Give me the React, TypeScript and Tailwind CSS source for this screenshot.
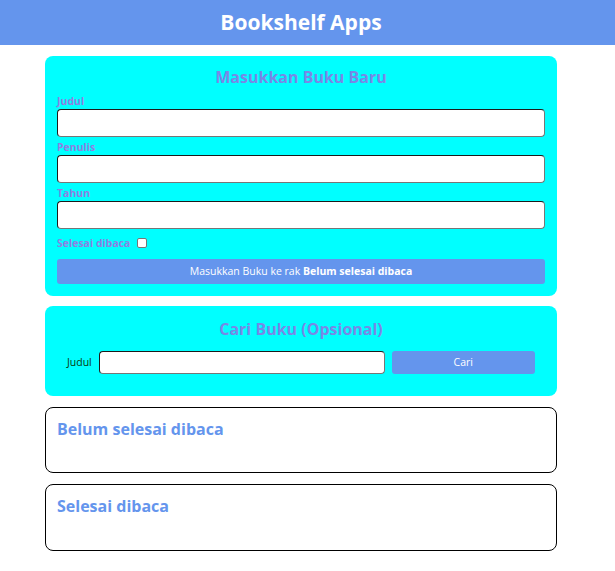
export default function App() {
  const inputCls =
    "block w-full h-[28px] bg-white rounded-[4px] border border-t-[#1b1b1b] border-l-[#1b1b1b] border-r-[#767676] border-b-[#767676] px-1 text-[13px] outline-none";

  return (
    <div className="min-h-[571px] bg-white font-['Open_Sans','Noto_Sans',sans-serif]">
      <header className="bg-[#6495ed] h-[45px] flex items-center">
        <div className="w-[602px] text-center">
          <h1 className="text-white text-[21px] font-bold leading-none">Bookshelf Apps</h1>
        </div>
      </header>

      <main className="w-[602px] pt-[11px]">
        <div className="w-[512px] mx-auto flex flex-col">
          <section className="bg-[#00ffff] rounded-lg px-3 pt-[10px] pb-[12px]">
            <h2 className="text-center text-[16px] font-bold text-[#7888e6] leading-[22px]">Masukkan Buku Baru</h2>
            <form className="mt-[3px]" onSubmit={(e) => e.preventDefault()}>
              {["Judul", "Penulis", "Tahun"].map((label) => (
                <div key={label}>
                  <label className="block text-[10.5px] font-bold text-[#8f7fe2] leading-[16px] pt-[2px]">{label}</label>
                  <input type={label === "Tahun" ? "number" : "text"} className={inputCls} />
                </div>
              ))}
              <div className="flex items-center gap-[7px] mt-[6px] h-[16px]">
                <label className="text-[10.5px] font-bold text-[#8f7fe2] leading-[13px]">Selesai dibaca</label>
                <input type="checkbox" className="w-[10px] h-[10px] appearance-none bg-white border border-[#767676] rounded-[2px]" />
              </div>
              <button
                type="submit"
                className="mt-[8px] w-full h-[25px] bg-[#6495ed] rounded-[3px] text-white text-[10.5px] leading-none"
              >
                Masukkan Buku ke rak <span className="font-bold">Belum selesai dibaca</span>
              </button>
            </form>
          </section>

          <section className="mt-[10px] bg-[#00ffff] rounded-lg px-3 pt-[12px] pb-[22px]">
            <h2 className="text-center text-[16px] font-bold text-[#7888e6] leading-[22px]">Cari Buku (Opsional)</h2>
            <form className="flex items-center mt-[11px] pl-[10px] pr-[10px]" onSubmit={(e) => e.preventDefault()}>
              <label className="text-[10.5px] text-[#0c3a0c] mr-[7px]">Judul</label>
              <input type="text" className={inputCls + " !w-[286px] !h-[23px]"} />
              <button type="submit" className="ml-[7px] w-[143px] h-[23px] bg-[#6495ed] rounded-[3px] text-white text-[10.5px]">
                Cari
              </button>
            </form>
          </section>

          <section className="mt-[11px] border border-black rounded-lg px-[11px] pt-[10px] h-[66px]">
            <h2 className="text-[16px] font-bold text-[#6495ed] leading-[22px]">Belum selesai dibaca</h2>
          </section>

          <section className="mt-[11px] border border-black rounded-lg px-[11px] pt-[10px] h-[67px]">
            <h2 className="text-[16px] font-bold text-[#6495ed] leading-[22px]">Selesai dibaca</h2>
          </section>
        </div>
      </main>
    </div>
  );
}
